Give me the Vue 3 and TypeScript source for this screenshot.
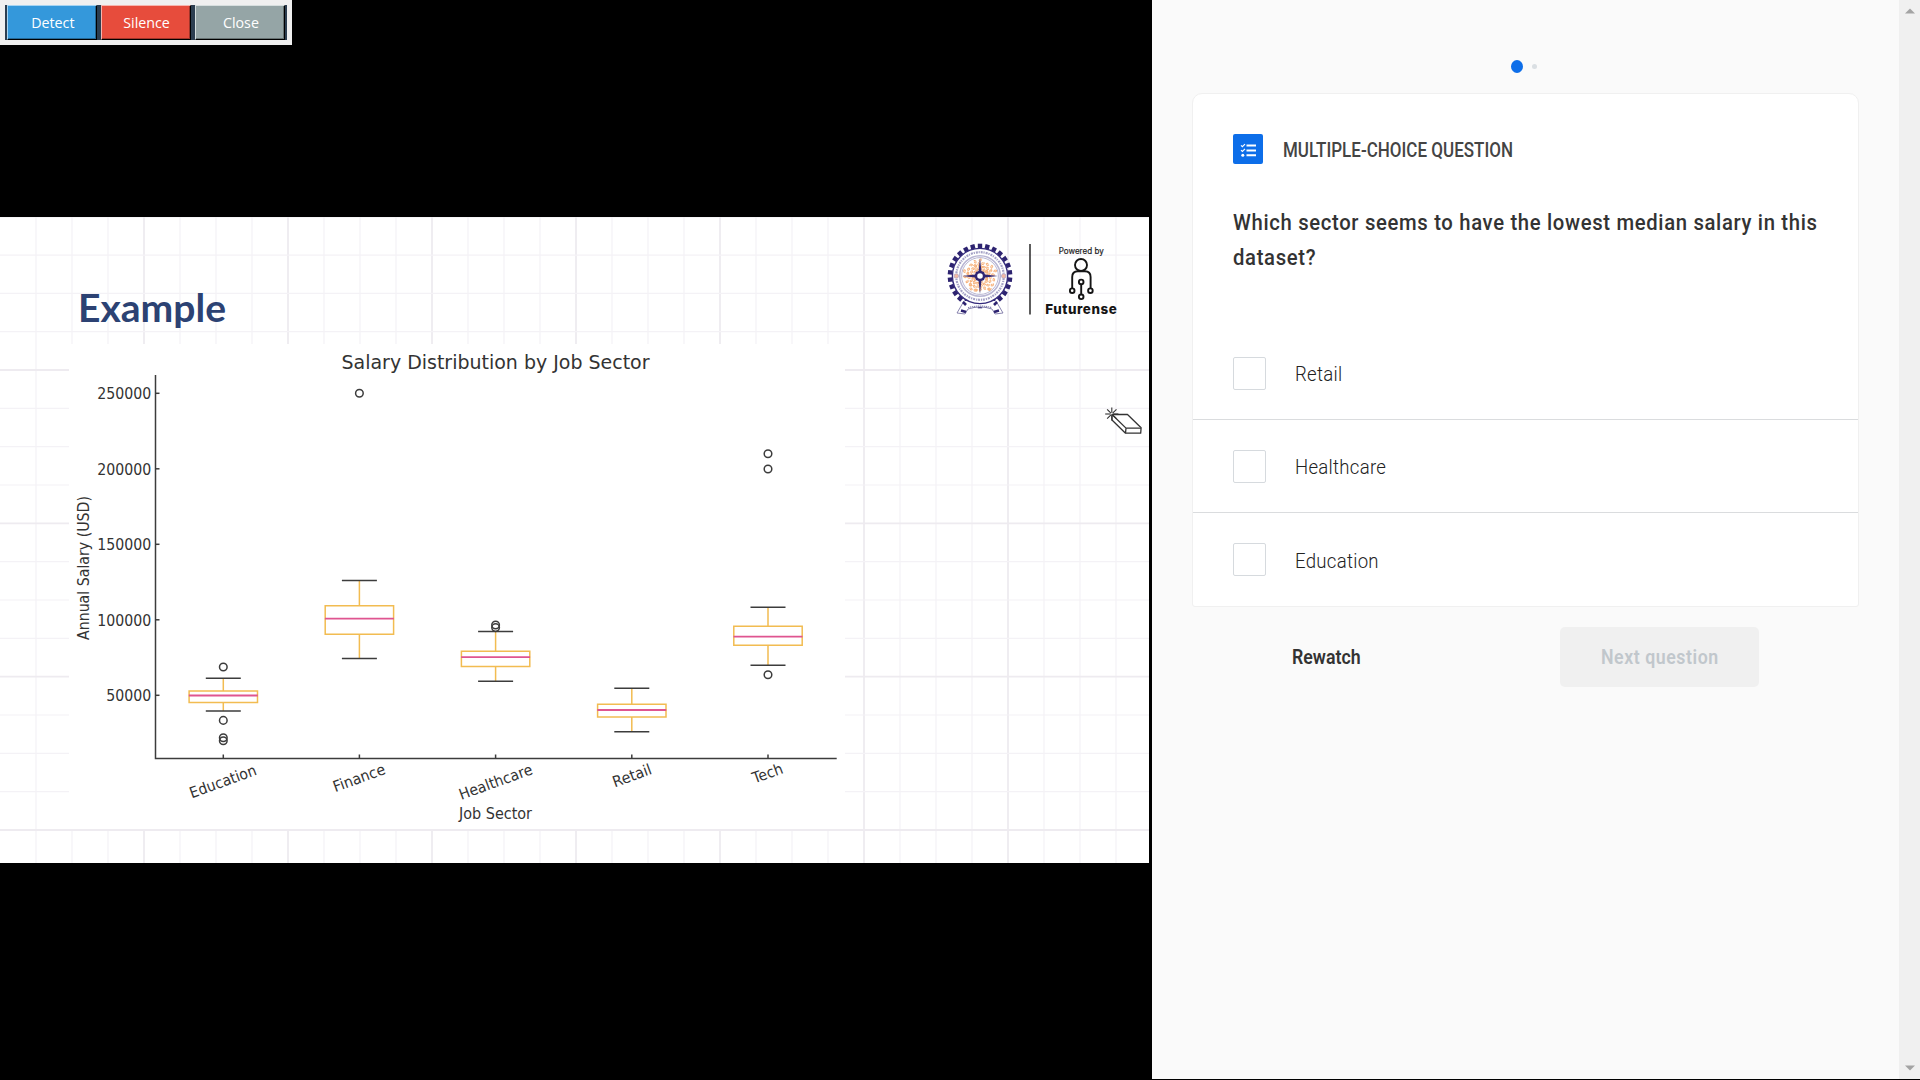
<script setup lang="ts">
interface Series {
  name: string
  x: number
  top: number
  q3: number
  median: number
  q1: number
  bottom: number
  outliers: number[]
  labelX: number
  labelY: number
  labelWidth: number
}

const series: Series[] = [
  { name: 'Education', x: 223.3, top: 678.3, q3: 691, median: 695.5, q1: 702.5, bottom: 711, outliers: [667, 720.4, 737.8, 740.8], labelX: 191.8, labelY: 798.4, labelWidth: 70 },
  { name: 'Finance', x: 359.4, top: 580.4, q3: 605.7, median: 618.6, q1: 634.2, bottom: 658.6, outliers: [393.3], labelX: 335.2, labelY: 792.2, labelWidth: 54.5 },
  { name: 'Healthcare', x: 495.6, top: 631.5, q3: 651.2, median: 657.2, q1: 666.6, bottom: 681.3, outliers: [625, 627.6], labelX: 461.2, labelY: 800, labelWidth: 77 },
  { name: 'Retail', x: 631.8, top: 688.3, q3: 704.2, median: 710, q1: 717, bottom: 731.7, outliers: [], labelX: 614.8, labelY: 787.4, labelWidth: 40.5 },
  { name: 'Tech', x: 768, top: 607.3, q3: 626.3, median: 636.7, q1: 645.3, bottom: 665.3, outliers: [453.7, 469, 674.8], labelX: 754.5, labelY: 783.6, labelWidth: 31.5 },
]

const ticks = [250000, 200000, 150000, 100000, 50000].map((value, i) => ({ value, y: 393.3 + i * 75.5 }))
const columns = Array.from({ length: 31 }, (_, i) => ({ x: 36 * (i + 1), major: (i + 1) % 4 === 0 }))
const rows = Array.from({ length: 17 }, (_, i) => ({ y: 216.7 + 38.33 * i, major: i % 4 === 0 }))
const teeth = Array.from({ length: 26 }, (_, i) => (i * 360) / 26)
const rays = [0, 45, 90, 135, 180, 225, 270, 315]
const flecks = Array.from({ length: 64 }, (_, i) => {
  const angle = i * 2.39996
  const radius = 6 + ((i * 7) % 11)
  return { x: Math.cos(angle) * radius, y: Math.sin(angle) * radius, turn: i * 53 }
})

const tools = [
  { label: 'Detect', kind: 'detect' },
  { label: 'Silence', kind: 'silence' },
  { label: 'Close', kind: 'close' },
]
const options = ['Retail', 'Healthcare', 'Education']
</script>

<template>
  <div class="screen">
    <main class="video">
      <svg class="slide" width="1149" height="646" viewBox="0 217 1149 646">
        <rect x="0" y="217" width="1149" height="646" fill="#fff" />
        <line v-for="c in columns" :key="'c' + c.x" :x1="c.x" :x2="c.x" y1="217" y2="863" :class="c.major ? 'major' : 'minor'" />
        <line v-for="r in rows" :key="'r' + r.y" x1="0" x2="1149" :y1="r.y" :y2="r.y" :class="r.major ? 'major' : 'minor'" />
        <rect x="69" y="344" width="776" height="485" fill="#fff" />

        <text class="heading" x="78" y="321.5" textLength="148" lengthAdjust="spacingAndGlyphs">Example</text>

        <g class="plot">
          <text class="title" x="341.5" y="369" textLength="308" lengthAdjust="spacingAndGlyphs">Salary Distribution by Job Sector</text>
          <path class="axis" d="M155.5 375V758.5H836.7" />
          <g v-for="t in ticks" :key="t.value">
            <path class="axis" :d="`M155.5 ${t.y}h4`" />
            <text x="151.3" :y="t.y + 6" text-anchor="end" :textLength="t.value < 100000 ? 45 : 54" lengthAdjust="spacingAndGlyphs">{{ t.value }}</text>
          </g>
          <text x="0" y="0" transform="translate(89 640) rotate(-90)" textLength="144" lengthAdjust="spacingAndGlyphs">Annual Salary (USD)</text>
          <text x="459" y="818.7" textLength="73" lengthAdjust="spacingAndGlyphs">Job Sector</text>

          <g v-for="s in series" :key="s.name">
            <path class="axis" :d="`M${s.x} 758.5v-4`" />
            <path class="box" :d="`M${s.x} ${s.top}V${s.q3}M${s.x} ${s.q1}V${s.bottom}M${s.x - 34.2} ${s.q3}h68.4V${s.q1}h-68.4z`" />
            <path class="cap" :d="`M${s.x - 17.5} ${s.top}h35M${s.x - 17.5} ${s.bottom}h35`" />
            <path class="median" :d="`M${s.x - 34.5} ${s.median}h69`" />
            <circle v-for="o in s.outliers" :key="o" class="outlier" :cx="s.x" :cy="o" r="3.8" />
            <text :transform="`translate(${s.labelX} ${s.labelY}) rotate(-20)`" :textLength="s.labelWidth" lengthAdjust="spacingAndGlyphs">{{ s.name }}</text>
          </g>
        </g>

        <g transform="translate(980 276)" fill="none">
          <rect v-for="a in teeth" :key="a" x="-2.2" y="-32.3" width="4.4" height="4.6" fill="#2d2370" :transform="`rotate(${a})`" />
          <path d="M-16 25L-23 37l8 1 3-5q12-4 24 0l3 5 8-1-7-12" fill="#fff" stroke="#6c679c" stroke-width=".8" />
          <circle r="27.6" fill="#fff" stroke="#342a7b" stroke-width="1.4" />
          <path d="M-19 34.5l5 1.5M19 34.5l-5 1.5M-17 26l3 3M17 26l-3 3" stroke="#2d2370" stroke-width="2.6" />
          <path d="M-12 31.6q12-3 24 0" stroke="#8a86b2" stroke-width="1.2" stroke-dasharray="1.3 .7" />
          <circle r="23.8" stroke="#a5a2c6" stroke-width="2.2" stroke-dasharray="1.2 1 2 .8" />
          <circle r="20.3" stroke="#b9b6d4" stroke-width="1.5" />
          <circle r="18.4" stroke="#9996bf" stroke-width=".7" />
          <path v-for="(f, i) in flecks" :key="i" d="M-1.7 0q1.7-2.4 3.2 0q-1.2 1.7-2-.1" stroke="#f7b27c" stroke-width="1" :transform="`translate(${f.x} ${f.y}) rotate(${f.turn})`" />
          <circle cx="-23.7" r="2.3" fill="#f2b9a4" stroke="#aca4c5" stroke-width=".7" />
          <circle cx="23.7" r="2.3" fill="#f2b9a4" stroke="#aca4c5" stroke-width=".7" />
          <path d="M0-18L1.4-5 4-4 5-1.4 18 0 5 1.4 4 4 1.4 5 0 18-1.4 5-4 4-5 1.4-18 0-5-1.4-4-4-1.4-5z" fill="#302673" />
          <circle r="3.6" fill="#fff" stroke="#302673" stroke-width="1.6" />
        </g>

        <line x1="1030" x2="1030" y1="244" y2="314.5" stroke="#272727" stroke-width="1.5" />
        <text class="powered" x="1058.7" y="253.8" textLength="45" lengthAdjust="spacingAndGlyphs">Powered by</text>
        <g fill="none" stroke="#151515" stroke-width="1.9">
          <circle cx="1081" cy="265" r="6" />
          <path d="M1072.2 288V277q0-5.7 5.7-5.7h7q5.7 0 5.7 5.7v11M1081.2 284.3v10" />
          <circle cx="1072.2" cy="290.7" r="2.3" />
          <circle cx="1090.4" cy="290.7" r="2.3" />
          <circle cx="1081.2" cy="281.9" r="2.3" />
          <circle cx="1081.2" cy="296.8" r="2.3" />
        </g>
        <text class="brand" x="1045.2" y="313.7" textLength="71.6" lengthAdjust="spacing">Futurense</text>

        <g fill="#fff" stroke="#333" stroke-width="1.3" stroke-linejoin="round">
          <path d="M1112 414.5V420l13.5 13.2h15.2l.4-5.4-13.6-13.3z" />
          <path d="M1112 414.5l14 13.6h15M1126 428.1l-.5 5" />
          <path v-for="r in rays" :key="r" d="M0-1.2v-5.4" :transform="`translate(1111.8 414) rotate(${r})`" stroke-width="1.1" />
        </g>
      </svg>

      <div class="toolbar">
        <div class="tools">
          <button v-for="t in tools" :key="t.kind" type="button" class="tool" :class="t.kind"><span>{{ t.label }}</span></button>
        </div>
      </div>
    </main>

    <aside class="panel">
      <div class="content">
        <div class="dots"><i class="dot current"></i><i class="dot"></i></div>

        <section class="card">
          <header class="kind-row">
            <span class="kind-icon">
              <svg width="30" height="30" viewBox="0 0 30 30" fill="none" stroke="#fff">
                <path d="M13.5 11.5H23M13.5 16.5H23M13.5 21.3H23" stroke-width="2" />
                <path d="M8 11.3l1.4 1.4 2.6-2.6M8 16.1l1.4 1.4 2.6-2.6" stroke-width="1.2" />
                <circle cx="9.8" cy="21.3" r="1.5" fill="#fff" stroke="none" />
              </svg>
            </span>
            <h2><span>MULTIPLE-CHOICE QUESTION</span></h2>
          </header>
          <p class="question"><span>Which sector seems to have the lowest median salary in this<br />dataset?</span></p>
          <ul class="options">
            <li v-for="o in options" :key="o">
              <i class="check"></i><span>{{ o }}</span>
            </li>
          </ul>
        </section>

        <footer class="actions">
          <button type="button" class="rewatch"><span>Rewatch</span></button>
          <button type="button" class="next" disabled><span>Next question</span></button>
        </footer>
      </div>
      <div class="scrollbar">
        <svg width="10" height="6" viewBox="0 0 10 6"><path d="M0 5.5L5 .5l5 5z" fill="#a3a3a3" /></svg>
        <svg width="10" height="6" viewBox="0 0 10 6"><path d="M0 .5l5 5 5-5z" fill="#a3a3a3" /></svg>
      </div>
    </aside>
  </div>
</template>

<style>
body {
  margin: 0;
  background: #000;
  overflow: hidden;
}
</style>

<style scoped>
* {
  box-sizing: border-box;
}

.screen {
  display: flex;
  width: 1920px;
  height: 1080px;
  background: #000;
  font-family: Roboto, "Liberation Sans", sans-serif;
}

.video {
  position: relative;
  display: flex;
  align-items: center;
  width: 1152px;
}

.slide {
  display: block;
}

.major {
  stroke: #eeebf0;
  stroke-width: 1.8;
}

.minor {
  stroke: #f4f2f6;
  stroke-width: 1.2;
}

.heading {
  font: 700 39px Lato, sans-serif;
  fill: #2c4273;
}

.plot text {
  font: 15.2px "DejaVu Sans", sans-serif;
  fill: #333;
}

.plot .title {
  font-size: 19px;
}

.axis,
.cap,
.box,
.median,
.outlier {
  fill: none;
  stroke: #3c3c3c;
  stroke-width: 1.5;
}

.box {
  stroke: #f2bc51;
}

.median {
  stroke: #df5590;
  stroke-width: 1.8;
}

.powered {
  font: 400 9px Inter, sans-serif;
  fill: #222;
  stroke: #222;
  stroke-width: 0.2;
}

.brand {
  font: 800 13.4px Inter, sans-serif;
  fill: #151515;
}

.toolbar {
  position: absolute;
  top: 0;
  left: 0;
  width: 292px;
  height: 45px;
  padding: 5px;
  background: #f0f0f0;
}

.tools {
  display: flex;
  gap: 4px;
  width: 282px;
  height: 35px;
  padding: 0 2px;
  background: #2c3e50;
}

.tool {
  width: 90px;
  height: 35px;
  padding: 0 0 1px 1px;
  border: 1px solid;
  border-right-color: #000;
  border-bottom-color: #000;
  color: #fff;
  font: 400 15px/30px "Open Sans", sans-serif;
  text-align: center;
}

.tool span {
  display: inline-block;
  transform: scaleX(0.95);
}

.detect {
  background: #3498db;
  border-top-color: #a6d4f2;
  border-left-color: #a6d4f2;
  box-shadow: inset -1px -1px #236896;
}

.silence {
  background: #e74c3c;
  border-top-color: #f6b5ae;
  border-left-color: #f6b5ae;
  box-shadow: inset -1px -1px #9f3429;
}

.close {
  background: #95a5a6;
  border-top-color: #d7dfdf;
  border-left-color: #d7dfdf;
  box-shadow: inset -1px -1px #667172;
}

.panel {
  display: flex;
  width: 768px;
  height: 1079px;
  background: #fafafa;
}

.content {
  width: 747px;
  padding: 60px 40px 0;
}

.dots {
  display: flex;
  align-items: center;
  gap: 9px;
  height: 13px;
  padding-left: 319px;
}

.dot {
  width: 5px;
  height: 5px;
  border-radius: 50%;
  background: #dadfe3;
}

.dot.current {
  width: 12px;
  height: 13px;
  background: #0d6ee9;
}

.card {
  width: 667px;
  height: 514px;
  margin-top: 20px;
  border: 1px solid #f0f0f0;
  border-radius: 10px 10px 3px 3px;
  background: #fff;
}

.kind-row {
  display: flex;
  align-items: center;
  gap: 20px;
  height: 30px;
  margin: 40px 0 0 40px;
}

.kind-icon {
  width: 30px;
  height: 30px;
  border-radius: 2px;
  background: #0d6ee9;
}

.kind-icon svg {
  display: block;
}

h2 {
  margin: 1px 0 0;
  color: #444;
  font-size: 20px;
  font-weight: 500;
  line-height: 28px;
  white-space: nowrap;
}

h2 span,
.question span,
.options span,
.rewatch span,
.next span {
  display: inline-block;
  transform-origin: left;
}

h2 span {
  transform: scaleX(0.85);
}

.question {
  height: 70px;
  margin: 41px 0 0 40px;
  color: #333;
  font-size: 22.5px;
  font-weight: 500;
  line-height: 35px;
  white-space: nowrap;
}

.question span {
  letter-spacing: 0.75px;
  transform: scaleX(0.9);
}

.options {
  margin: 52px 0 0;
  padding: 0;
  list-style: none;
}

.options li {
  display: flex;
  align-items: center;
  gap: 29px;
  height: 93px;
  padding: 0 0 0 40px;
  border-bottom: 1px solid #dadcde;
  color: #222;
  font-size: 20px;
  font-weight: 300;
}

.options li:last-child {
  border-bottom: 0;
}

.options span {
  margin-top: 2px;
  letter-spacing: 0.3px;
  transform: scaleX(0.93);
}

.check {
  width: 33px;
  height: 33px;
  border: 1px solid #d6dade;
  border-radius: 2px;
}

.actions {
  display: flex;
  align-items: center;
  justify-content: space-between;
  margin: 20px 100px 0 100px;
}

.rewatch,
.next {
  height: 60px;
  padding: 2px 0 0;
  border: 0;
  background: none;
  color: #333;
  font: 600 19.5px/58px Roboto, sans-serif;
}

.next {
  width: 199px;
  padding-left: 41px;
  border-radius: 5px;
  background: #f0f0f0;
  color: #c1c7cc;
  text-align: left;
}

.rewatch span {
  transform: scaleX(0.91);
}

.next span {
  letter-spacing: 0.6px;
  transform: scaleX(0.91);
}

.scrollbar {
  display: flex;
  flex-direction: column;
  align-items: center;
  justify-content: space-between;
  width: 21px;
  padding: 8px 0;
  background: #f0f0f0;
}
</style>
